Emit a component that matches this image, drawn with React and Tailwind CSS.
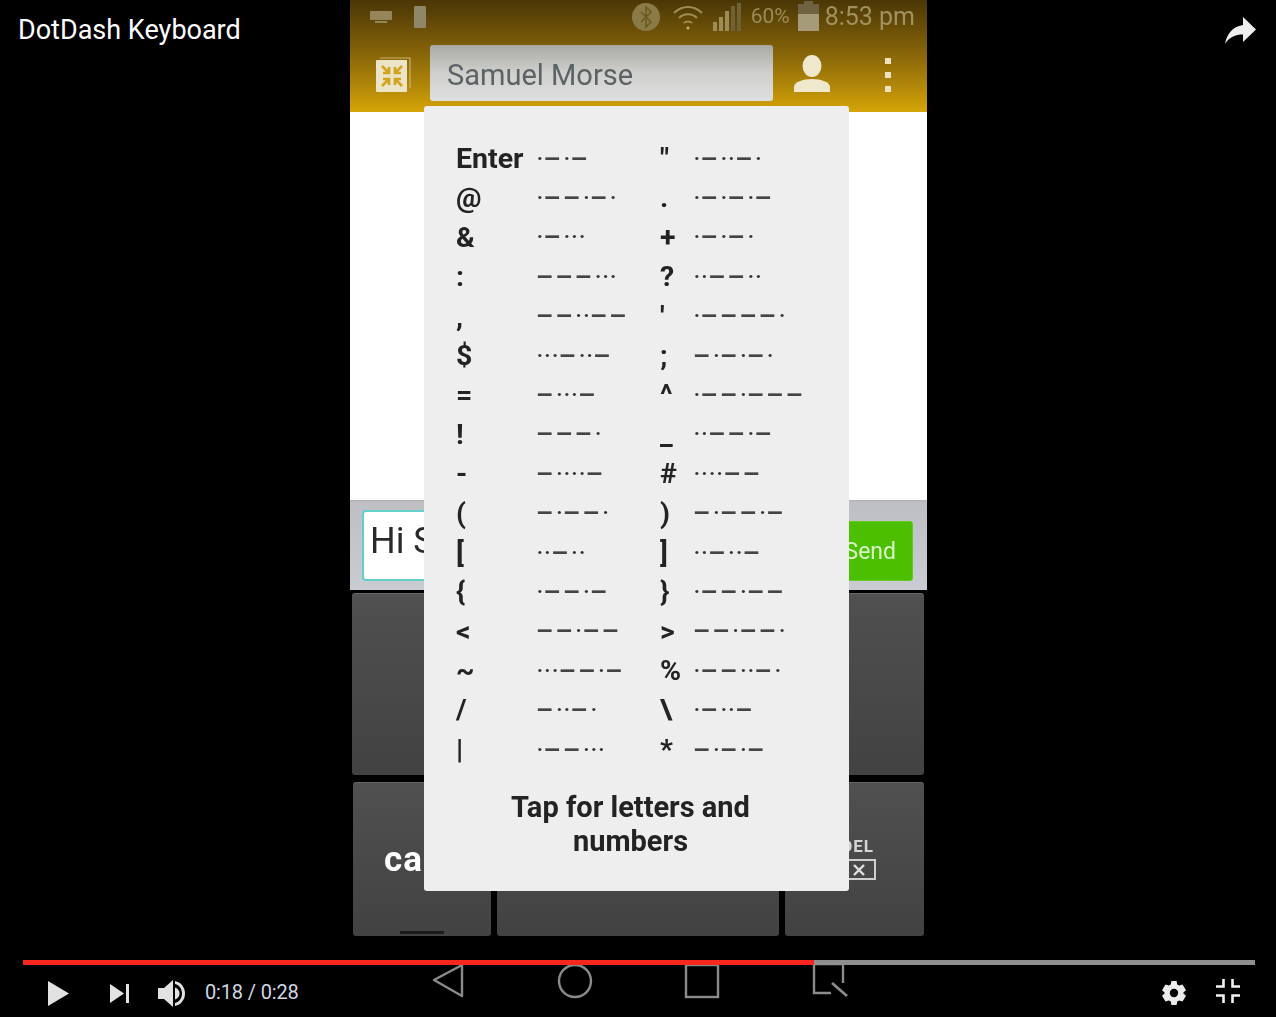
import React from "react";

const roboto = "font-['Roboto',sans-serif]";

function Morse({ code }) {
  return (
    <span className="flex items-center h-full">
      {code.split("").map((c, i) =>
        c === "." ? (
          <span key={i} className="w-[7.6px] h-full flex items-center overflow-hidden text-[#333] text-[18px] font-black leading-none">·</span>
        ) : (
          <span key={i} className="w-[19.4px] h-full flex items-center overflow-hidden text-[#444] text-[20px] font-black leading-none">—</span>
        )
      )}
    </span>
  );
}

const rows = [
  ["Enter", ".-.-", '"', ".-..-."],
  ["@", ".--.-.", ".", ".-.-.-"],
  ["&", ".-...", "+", ".-.-."],
  [":", "---...", "?", "..--.."],
  [",", "--..--", "'", ".----."],
  ["$", "...-..-", ";", "-.-.-."],
  ["=", "-...-", "^", ".--.---"],
  ["!", "---.", "_", "..--.-"],
  ["-", "-....-", "#", "....--"],
  ["(", "-.--.", ")", "-.--.-"],
  ["[", "..-..", "]", "..-..-"],
  ["{", ".--.-", "}", ".--.--"],
  ["<", "--.--", ">", "--.--."],
  ["~", "...--.-", "%", ".--..-."],
  ["/", "-..-.", "\\", ".-..-"],
  ["|", ".--...", "*", "-.-.-"],
];

function Popup() {
  return (
    <div className={`absolute left-[74px] top-[106px] w-[425px] h-[785px] bg-[#eeeeee] rounded-[3px] pt-[33px] pl-[32px] text-[#232323] ${roboto}`}>
      <div className="grid grid-cols-[81px_123px_34px_1fr] auto-rows-[39.4px]">
        {rows.map((r, i) => (
          <React.Fragment key={i}>
            <span className="text-[28.5px] font-bold leading-[39.4px] whitespace-nowrap">{r[0]}</span>
            <Morse code={r[1]} />
            <span className="text-[28.5px] font-bold leading-[39.4px]">{r[2]}</span>
            <Morse code={r[3]} />
          </React.Fragment>
        ))}
      </div>
      <div className="mt-[21px] pr-[44px] text-center text-[29px] font-bold leading-[34px]">
        Tap for letters and<br />numbers
      </div>
    </div>
  );
}

function StatusBar() {
  return (
    <div className={`h-[33px] flex items-center pl-[20px] pr-[12px] text-[#a0925f] ${roboto}`}>
      <svg width="22" height="12" viewBox="0 0 22 12" className="mr-[22px]">
        <rect x="0" y="0" width="22" height="9" rx="1" fill="#94865a" />
        <rect x="5" y="10" width="12" height="2" fill="#94865a" />
      </svg>
      <span className="w-[12px] h-[22px] bg-[#8f8768] rounded-[1px]" />
      <span className="flex-1" />
      <svg width="28" height="28" viewBox="0 0 28 28" className="mr-[12px]">
        <circle cx="14" cy="14" r="14" fill="#8a7a45" />
        <path d="M9 9l10 10-5 5V4l5 5-10 10" fill="none" stroke="#6d5a1e" strokeWidth="1.6" />
      </svg>
      <svg width="32" height="26" viewBox="0 0 32 26" fill="none" stroke="#9c8c55" strokeWidth="2.2" className="mr-[9px]">
        <path d="M2 9c8-8 20-8 28 0" />
        <path d="M7 14c5-5 13-5 18 0" />
        <path d="M12 19c2-2 6-2 8 0" />
        <circle cx="16" cy="24" r="1.6" fill="#c0b078" stroke="none" />
      </svg>
      <svg width="28" height="28" viewBox="0 0 28 28" className="mr-[10px]">
        <rect x="0" y="19" width="4" height="9" fill="#9c8c55" />
        <rect x="6" y="14" width="4" height="14" fill="#9c8c55" />
        <rect x="12" y="8" width="4" height="20" fill="#9c8c55" />
        <rect x="18" y="3" width="4" height="25" fill="#6f6235" />
        <rect x="24" y="0" width="4" height="28" fill="#6f6235" />
      </svg>
      <span className="text-[21px] leading-none mr-[8px] text-[#9a8c58]">60%</span>
      <span className="relative w-[21px] h-[27px] mr-[6px] mt-[2px] bg-[#6f6240]">
        <span className="absolute left-[6px] -top-[3px] w-[9px] h-[3px] bg-[#6f6240]" />
        <span className="absolute left-0 right-0 bottom-0 h-[17px] bg-[#a59b78]" />
      </span>
      <span className="text-[25px] leading-none text-[#a0925f]">8:53 pm</span>
    </div>
  );
}

function AppBar() {
  return (
    <div className={`flex-1 relative flex items-start ${roboto}`}>
      <svg width="36" height="36" viewBox="0 0 36 36" className="ml-[25px] mt-[24px]">
        <path d="M5 1h30v30" fill="none" stroke="#c9b273" strokeWidth="1.2" />
        <rect x="1" y="3" width="31" height="32" rx="1" fill="#ece4c6" />
        <g fill="none" stroke="#d2a31c" strokeWidth="2.6">
          <path d="M7 9l7 7M14 10v6H8" />
          <path d="M27 9l-7 7M20 10v6h6" />
          <path d="M7 29l7-7M14 28v-6H8" />
          <path d="M27 29l-7-7M20 28v-6h6" />
        </g>
      </svg>
      <div className="ml-[19px] mt-[12px] w-[343px] h-[56px] rounded-[3px] bg-gradient-to-b from-[#a9a9a4] via-[#cfcfcd] to-[#dedfdf] flex items-center pl-[17px] pt-[5px]">
        <span className="text-[29px] leading-none text-[#5c6266]">Samuel Morse</span>
      </div>
      <svg width="36" height="38" viewBox="0 0 36 38" className="ml-[21px] mt-[22px]" fill="#f0e8cc">
        <ellipse cx="18" cy="11" rx="9.5" ry="11" />
        <path d="M0 37v-5c0-5 9-8 18-8s18 3 18 8v5z" />
      </svg>
      <span className="ml-[55px] mt-[25px] flex flex-col gap-[8px]">
        <span className="w-[6px] h-[6px] bg-[#ece2c2]" />
        <span className="w-[6px] h-[6px] bg-[#ece2c2]" />
        <span className="w-[6px] h-[6px] bg-[#ece2c2]" />
      </span>
    </div>
  );
}

function Compose() {
  return (
    <div className={`h-[90px] shrink-0 bg-gradient-to-b from-[#bdbfc3] to-[#c9ccd2] border-t border-[#aeb0b3] flex justify-between items-start pl-[12px] pr-[14px] ${roboto}`}>
      <div className="mt-[9px] w-[300px] h-[71px] bg-white border-2 border-[#62cfc9] rounded-[4px] pl-[6px] text-[36px] leading-[58px] text-[#2a2a2a] overflow-hidden">Hi Samuel</div>
      <div className="mt-[20px] w-[120px] h-[60px] bg-[#4cc000] rounded-[3px] border border-[#62cc1e] flex items-center justify-end pr-[16px] pt-[3px] text-[23px] text-[#d8f4c8]">Send</div>
    </div>
  );
}

const keyCls = "bg-gradient-to-b from-[#505050] to-[#424242] rounded-[3px] border-t border-[#666666]";

function Keyboard() {
  return (
    <div className={`h-[350px] shrink-0 bg-black px-[2px] pt-[3px] flex flex-col ${roboto}`}>
      <div className={`h-[182px] w-[572px] ${keyCls}`} />
      <div className="mt-[7px] ml-[1px] h-[154px] flex gap-[6px]">
        <div className={`relative w-[138px] ${keyCls} flex items-center pl-[31px] pt-[1px] text-[35px] font-bold tracking-[1px] text-white`}>
          caps
          <span className="absolute left-[47px] bottom-[2px] w-[44px] h-[3px] bg-[#1b1b1b]" />
        </div>
        <div className={`w-[282px] ${keyCls}`} />
        <div className={`w-[139px] ${keyCls} flex flex-col items-end pt-[53px] pr-[48px] text-[#d6d6d6]`}>
          <span className="text-[17px] font-bold leading-[20px] tracking-[1px] mr-[2px]">DEL</span>
          <span className="mt-[3px] w-[34px] h-[21px] border-2 border-[#cfcfcf] flex items-center justify-center">
            <svg width="12" height="12" viewBox="0 0 12 12" stroke="#e0e0e0" strokeWidth="2.4"><path d="M1 1l10 10M11 1L1 11" /></svg>
          </span>
        </div>
      </div>
    </div>
  );
}

function NavBar() {
  return (
    <div className="flex-1 bg-black flex items-start">
      <svg width="36" height="40" viewBox="0 0 36 40" fill="none" stroke="#8b8b8b" strokeWidth="2.4" className="ml-[80px] mt-[22px]">
        <path d="M4 18L32 3v31z" strokeLinejoin="round" />
      </svg>
      <svg width="38" height="40" viewBox="0 0 38 40" fill="none" stroke="#8b8b8b" strokeWidth="2.4" className="ml-[90px] mt-[22px]">
        <circle cx="19" cy="19" r="16" />
      </svg>
      <svg width="38" height="40" viewBox="0 0 38 40" fill="none" stroke="#8b8b8b" strokeWidth="2.4" className="ml-[89px] mt-[22px]">
        <rect x="3" y="3" width="32" height="32" />
      </svg>
      <svg width="40" height="42" viewBox="0 0 40 42" fill="none" stroke="#8b8b8b" strokeWidth="2.4" className="ml-[91px] mt-[22px]">
        <path d="M31 21V2H2v29h17" />
        <path d="M20 21l15 13" strokeWidth="2.8" />
      </svg>
    </div>
  );
}

function Controls() {
  return (
    <div className={`absolute left-0 right-0 bottom-0 h-[57px] ${roboto}`}>
      <div className="ml-[23px] w-[1232px] h-[5px] bg-[#8f8f8f]">
        <div className="h-full bg-[#f5271f]" style={{ width: "791px" }} />
      </div>
      <div className="flex items-center pl-[48px] pr-[36px] h-[52px] pt-[4px] text-[#dddddd]">
        <svg width="21" height="25" viewBox="0 0 21 25" fill="#e2e2e2"><path d="M0 0l21 12.5L0 25z" /></svg>
        <svg width="19" height="19" viewBox="0 0 19 19" fill="#e2e2e2" className="ml-[41px]"><path d="M0 0l14 9.5L0 19z" /><rect x="16" y="0" width="3" height="19" /></svg>
        <svg width="28" height="27" viewBox="0 0 28 27" fill="#e2e2e2" className="ml-[29px]">
          <path d="M0 8h6l9-8v27l-9-8H0z" />
          <path d="M17 7.5c3 1 4.500 3.400 4.500 6s-1.500 5-4.500 6z" />
          <path d="M17 1c6 1.200 10 6.300 10 12.500S23 24.800 17 26v-3c4.500-1.200 7-5 7-9.500S21.500 5.200 17 4z" />
        </svg>
        <span className="ml-[19px] mb-[2px] text-[20px] tracking-[-0.15px] text-[#cfd8e0] leading-none">0:18 / 0:28</span>
        <span className="flex-1" />
        <svg width="24" height="24" viewBox="0 0 24 24" fill="#ececec">
          <path fillRule="evenodd" d="M14.600 0l.6 3.400 2 1.100 3.300-1.100L24 9.300l-2.600 2.100v1.200l2.600 2.100-3.500 5.900-3.300-1.100-2 1.100-.6 3.400H9.400l-.6-3.400-2-1.100-3.300 1.100L0 14.700l2.600-2.100v-1.200L0 9.300l3.500-5.900 3.300 1.100 2-1.100L9.400 0zM12 7.800a4.200 4.200 0 100 8.400 4.200 4.200 0 000-8.400z" />
        </svg>
        <svg width="24" height="24" viewBox="0 0 24 24" fill="none" stroke="#f2f2f2" strokeWidth="2.600" className="ml-[30px] mb-[4px]">
          <path d="M7.500 0v7.500H0M16.500 0v7.500H24M7.500 24v-7.500H0M16.500 24v-7.500H24" />
        </svg>
      </div>
    </div>
  );
}

export default function App() {
  return (
    <div className="relative w-[1276px] h-[1017px] bg-black overflow-hidden">
      <div className="relative ml-[350px] w-[577px] h-[1017px] flex flex-col blur-[0.5px]">
        <div className="h-[112px] shrink-0 flex flex-col bg-gradient-to-b from-[#4b3706] via-[#8a6709] to-[#d6a507]">
          <StatusBar />
          <AppBar />
        </div>
        <div className="h-[388px] shrink-0 bg-white" />
        <Compose />
        <Keyboard />
        <NavBar />
        <Popup />
      </div>
      <div className={`absolute left-[18px] top-[13px] text-[27px] leading-[34px] text-white ${roboto}`}>DotDash Keyboard</div>
      <svg width="32" height="28" viewBox="0 0 32 28" fill="#eeeeee" className="absolute left-[1225px] top-[17px]">
        <path d="M18 0l13 12.500L18 25v-7.500C10 17.500 4.500 20 0 27c1.500-9 7-17.500 18-19z" />
      </svg>
      <Controls />
    </div>
  );
}
